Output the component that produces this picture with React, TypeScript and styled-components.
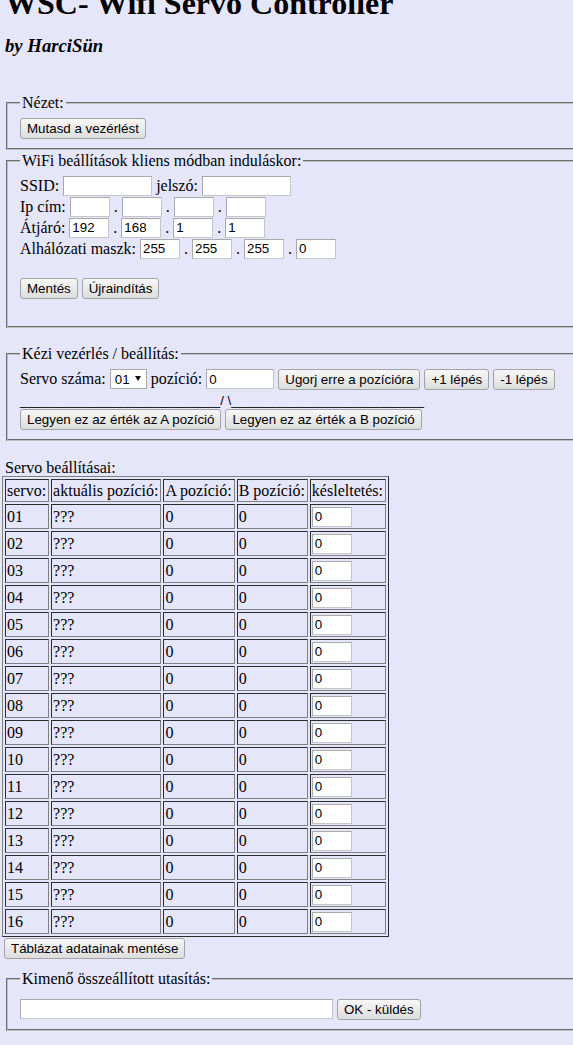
import React from 'react';
import styled, { createGlobalStyle } from 'styled-components';

const GlobalStyle = createGlobalStyle`
  html, body {
    margin: 0;
    padding: 0;
    background: #e6e6fa;
    overflow-x: hidden;
  }

  body {
    font-family: 'Liberation Serif', 'Times New Roman', serif;
    font-size: 16px;
    color: #000;
  }
`;

const Page = styled.div`
  display: flow-root;
  padding: 0 4px;
`;

const Title = styled.h1`
  margin: -15px 0 0 1px;
  font-size: 32px;
  line-height: 37px;
  font-weight: bold;
  white-space: nowrap;
`;

const Author = styled.h3`
  margin: 13px 0 0 1px;
  font-size: 18.72px;
  line-height: 21px;
  font-style: italic;
  font-weight: bold;
`;

const Group = styled.fieldset<{ $top: number }>`
  width: 620px;
  min-inline-size: 0;
  margin: ${(props) => props.$top}px 0 0 2px;
  padding: 5px 12px 9px;
  border: 2px groove #c0c0c0;
`;

const Legend = styled.legend`
  padding: 0 2px;
  font-size: 16px;
  line-height: 18px;
`;

const Line = styled.div<{ $h?: number; $mt?: number }>`
  display: flex;
  align-items: center;
  gap: 4px;
  height: ${(props) => props.$h ?? 21}px;
  margin-top: ${(props) => props.$mt ?? 0}px;
  white-space: nowrap;
`;

const Blank = styled.div`
  height: 18px;
`;

const Field = styled.input<{ $w: number }>`
  box-sizing: border-box;
  width: ${(props) => props.$w}px;
  height: 20px;
  margin: 0;
  padding: 0 2px;
  border: 1px solid #a9a9a9;
  border-bottom-color: #c6c6c6;
  border-right-color: #c6c6c6;
  background: #fff;
  font: 13.33px 'Liberation Sans', Arial, sans-serif;
  color: #000;
  outline: none;
`;

const Button = styled.button`
  box-sizing: border-box;
  height: 21px;
  margin: 0;
  padding: 0 6px;
  border: 1px solid #a3a3a3;
  border-radius: 3px;
  background: linear-gradient(#f7f7f7, #dddddd);
  font: 13.33px 'Liberation Sans', Arial, sans-serif;
  color: #000;
  white-space: nowrap;
`;

const SelectBox = styled.span`
  position: relative;
  display: inline-flex;
`;

const Select = styled.select`
  appearance: none;
  box-sizing: border-box;
  width: 37px;
  height: 20px;
  margin: 0;
  padding: 0 0 0 4px;
  border: 1px solid #a9a9a9;
  border-radius: 0;
  background: #fff;
  font: 13.33px 'Liberation Sans', Arial, sans-serif;
  color: #000;
`;

const Caret = styled.span`
  position: absolute;
  right: 6px;
  top: 7px;
  width: 0;
  height: 0;
  border-left: 3px solid transparent;
  border-right: 3px solid transparent;
  border-top: 5px solid #111;
  pointer-events: none;
`;

const Divider = styled.div`
  box-sizing: border-box;
  height: 18px;
  padding-top: 2px;
  font: 13.33px/18px 'Liberation Sans', Arial, sans-serif;
  white-space: pre;
`;

const Caption = styled.div`
  margin: 18px 0 0 1px;
  line-height: 17px;
`;

const Grid = styled.table`
  margin-left: -2px;
  border: 1px outset #808080;
  border-spacing: 2px;
`;

const Cell = styled.td<{ $head?: boolean }>`
  border: 1px inset #808080;
  padding: 1px 2px 1px 1px;
  line-height: ${(props) => (props.$head ? 19 : 21)}px;
  text-align: left;
  white-space: nowrap;
`;

const DelayField = styled(Field)`
  display: block;
`;

const servos = Array.from({ length: 16 }, (_, i) => String(i + 1).padStart(2, '0'));

const Dot = () => <span>.</span>;

const Octets = ({ values }: { values: string[] }) => (
  <>
    {values.map((v, i) => (
      <React.Fragment key={i}>
        {i > 0 && <Dot />}
        <Field $w={40} defaultValue={v} />
      </React.Fragment>
    ))}
  </>
);

const App = () => {
  return (
    <Page>
      <GlobalStyle />
      <Title>WSC- Wifi Servo Controller</Title>
      <Author>by HarciSün</Author>

      <Group $top={38}>
        <Legend>Nézet:</Legend>
        <Line $h={22}>
          <Button>Mutasd a vezérlést</Button>
        </Line>
      </Group>

      <Group $top={2}>
        <Legend>WiFi beállítások kliens módban induláskor:</Legend>
        <Line>
          SSID:
          <Field $w={89} />
          jelszó:
          <Field $w={89} type="text" />
        </Line>
        <Line>
          Ip cím:
          <Octets values={['', '', '', '']} />
        </Line>
        <Line>
          Átjáró:
          <Octets values={['192', '168', '1', '1']} />
        </Line>
        <Line>
          Alhálózati maszk:
          <Octets values={['255', '255', '255', '0']} />
        </Line>
        <Blank />
        <Line $h={22}>
          <Button>Mentés</Button>
          <Button>Újraindítás</Button>
        </Line>
        <Blank />
      </Group>

      <Group $top={17}>
        <Legend>Kézi vezérlés / beállítás:</Legend>
        <Line $h={22}>
          Servo száma:
          <SelectBox>
            <Select defaultValue="01">
              {servos.map((s) => (
                <option key={s}>{s}</option>
              ))}
            </Select>
            <Caret />
          </SelectBox>
          pozíció:
          <Field $w={68} defaultValue="0" />
          <Button>Ugorj erre a pozícióra</Button>
          <Button>+1 lépés</Button>
          <Button>-1 lépés</Button>
        </Line>
        <Divider>{'_'.repeat(27) + '/ \\' + '_'.repeat(26)}</Divider>
        <Line $h={22}>
          <Button>Legyen ez az érték az A pozíció</Button>
          <Button>Legyen ez az érték a B pozíció</Button>
        </Line>
      </Group>

      <Caption>Servo beállításai:</Caption>
      <Grid>
        <tbody>
          <tr>
            <Cell $head>servo:</Cell>
            <Cell $head>aktuális pozíció:</Cell>
            <Cell $head>A pozíció:</Cell>
            <Cell $head>B pozíció:</Cell>
            <Cell $head>késleltetés:</Cell>
          </tr>
          {servos.map((s) => (
            <tr key={s}>
              <Cell>{s}</Cell>
              <Cell>???</Cell>
              <Cell>0</Cell>
              <Cell>0</Cell>
              <Cell>
                <DelayField $w={40} defaultValue="0" />
              </Cell>
            </tr>
          ))}
        </tbody>
      </Grid>
      <Line $h={22}>
        <Button>Táblázat adatainak mentése</Button>
      </Line>

      <Group $top={11}>
        <Legend>Kimenő összeállított utasítás:</Legend>
        <Line $h={22} $mt={5}>
          <Field $w={313} />
          <Button>OK - küldés</Button>
        </Line>
      </Group>
    </Page>
  );
};

export default App;
